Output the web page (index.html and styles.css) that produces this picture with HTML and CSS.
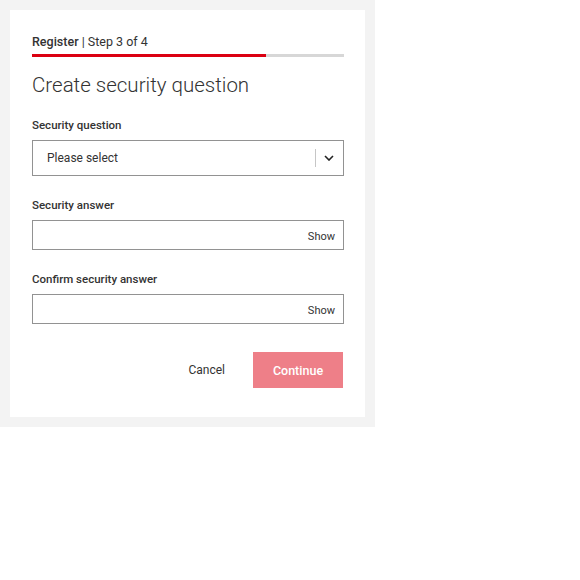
FILE: index.html
```html
<!DOCTYPE html>
<html>
<head>
<meta charset="utf-8">
<link rel="stylesheet" href="styles.css">
</head>
<body>
<div class="backdrop">
  <div class="card">
    <div class="step"><span class="step-strong">Register</span> | Step 3 of 4</div>
    <div class="progress"><div class="progress-fill" style="width:75%"></div></div>
    <h1 class="title">Create security question</h1>

    <div class="field field-first">
      <label class="label">Security question</label>
      <div class="select">
        <span class="select-text">Please select</span>
        <span class="select-divider"></span>
        <svg class="chevron" width="10" height="6" viewBox="0 0 10 6"><path d="M1 1 L5 5 L9 1" fill="none" stroke="#222" stroke-width="1.6"/></svg>
      </div>
    </div>

    <div class="field">
      <label class="label">Security answer</label>
      <div class="input"><span class="show">Show</span></div>
    </div>

    <div class="field">
      <label class="label">Confirm security answer</label>
      <div class="input"><span class="show">Show</span></div>
    </div>

    <div class="actions">
      <span class="cancel">Cancel</span>
      <span class="continue">Continue</span>
    </div>
  </div>
</div>
</body>
</html>
```
FILE: styles.css
```css
html, body {
  margin: 0;
  padding: 0;
  background: #fff;
}
body {
  font-family: Roboto, "Liberation Sans", sans-serif;
  color: #333;
}
.backdrop {
  width: 375px;
  height: 427px;
  box-sizing: border-box;
  padding: 10px;
  background: #f3f3f3;
}
.card {
  background: #fff;
  width: 355px;
  height: 407px;
  box-sizing: border-box;
  padding: 24px 21px 0 22px;
}
.step {
  font-size: 12.5px;
  line-height: 16px;
  color: #333;
}
.step-strong {
  font-weight: 500;
}
.progress {
  margin-top: 4px;
  height: 3px;
  background: #d7d7d7;
}
.progress-fill {
  height: 3px;
  background: #db0011;
}
.title {
  margin: 15px 0 0 0;
  font-size: 20.5px;
  font-weight: 300;
  line-height: 26px;
  color: #333;
}
.field {
  margin-top: 22px;
}
.field-first {
  margin-top: 20px;
}
.label {
  display: block;
  font-size: 11.5px;
  font-weight: 500;
  line-height: 14px;
  color: #333;
  margin-bottom: 8px;
}
.select {
  height: 36px;
  box-sizing: border-box;
  border: 1px solid #929292;
  display: flex;
  align-items: center;
  padding: 0 0 0 14px;
}
.select-text {
  flex: 1;
  font-size: 12px;
  color: #333;
}
.select-divider {
  width: 1px;
  height: 18px;
  background: #c6c6c6;
}
.chevron {
  margin: 0 9px 0 8px;
}
.input {
  height: 30px;
  box-sizing: border-box;
  border: 1px solid #929292;
  display: flex;
  align-items: center;
  justify-content: flex-end;
  padding-right: 8px;
}
.show {
  font-size: 11px;
  color: #333;
  margin-top: 2px;
}
.actions {
  margin-top: 28px;
  display: flex;
  justify-content: flex-end;
  align-items: center;
}
.cancel {
  font-size: 12px;
  color: #333;
  margin-right: 28px;
}
.continue {
  width: 90px;
  height: 36px;
  background: #ee7f88;
  color: #fff;
  font-size: 12.5px;
  font-weight: 500;
  display: flex;
  align-items: center;
  justify-content: center;
  margin-right: 1px;
}
```
